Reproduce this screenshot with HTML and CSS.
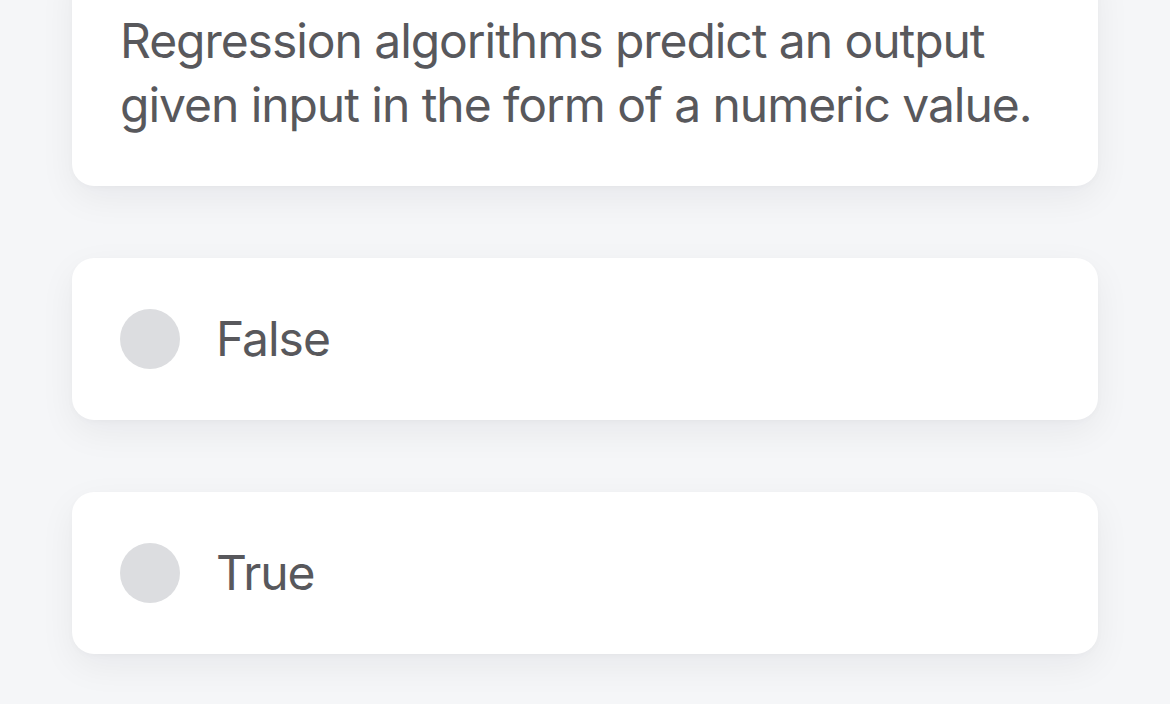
FILE: index.html
```html
<!DOCTYPE html>
<html lang="en">
<head>
<meta charset="utf-8">
<title>Question</title>
<link rel="stylesheet" href="styles.css">
</head>
<body>
<main class="page">
  <section class="card question">
    <p class="question-text">Regression algorithms predict an output given input in the form of a numeric value.</p>
  </section>
  <div class="card option">
    <span class="radio"></span>
    <span class="label">False</span>
  </div>
  <div class="card option">
    <span class="radio"></span>
    <span class="label">True</span>
  </div>
</main>
</body>
</html>
```
FILE: styles.css
```css
html, body {
  margin: 0;
  padding: 0;
  background: #f5f6f8;
  height: 100%;
  overflow: hidden;
}
body {
  font-family: Inter, "Noto Sans", sans-serif;
  color: #58585c;
}
.page {
  display: flex;
  flex-direction: column;
  gap: 72px;
  padding: 0 72px;
}
.card {
  background: #ffffff;
  border-radius: 22px;
  box-shadow: 0 12px 36px rgba(20, 24, 40, 0.06), 0 2px 6px rgba(20, 24, 40, 0.025);
}
.question {
  margin-top: -39px;
  padding: 48px 48px 49px;
}
.question-text {
  margin: 0;
  font-size: 48px;
  line-height: 64px;
  letter-spacing: -1.05px;
}
.option {
  display: flex;
  align-items: center;
  gap: 36px;
  height: 162px;
  box-sizing: border-box;
  padding: 0 48px;
}
.radio {
  width: 60px;
  height: 60px;
  border-radius: 50%;
  background: #dcdde0;
  flex: none;
}
.label {
  font-size: 48px;
  line-height: 64px;
  letter-spacing: -1.05px;
}
```
